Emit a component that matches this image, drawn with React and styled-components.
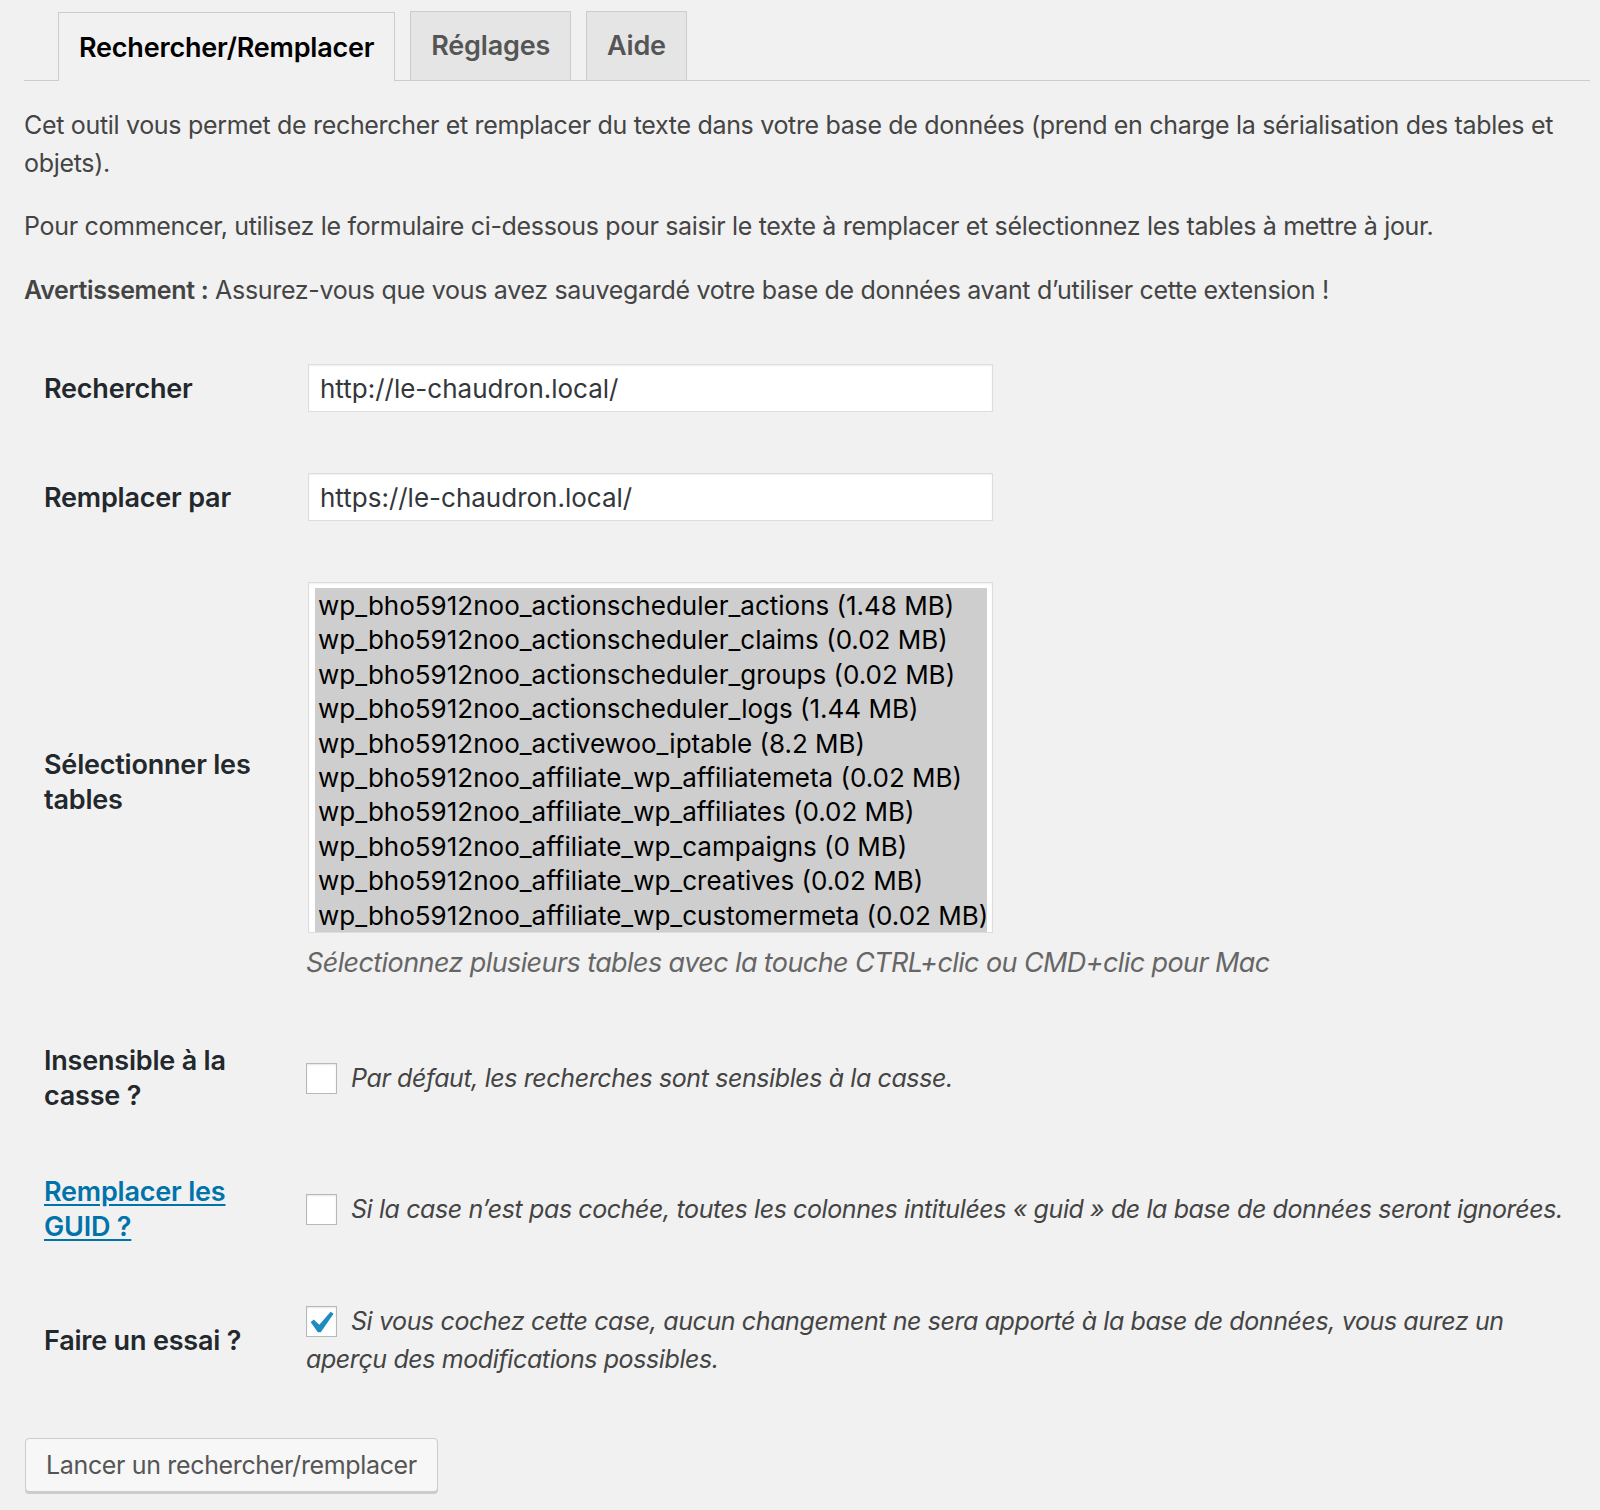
import React from "react";
import styled, { createGlobalStyle } from "styled-components";

const GlobalStyle = createGlobalStyle`
  html, body { margin: 0; padding: 0; }
  body {
    background: #f1f1f1;
    font-family: Inter, "Noto Sans", "Liberation Sans", sans-serif;
    color: #444;
    -webkit-font-smoothing: antialiased;
  }
  * { box-sizing: border-box; }
`;

const Page = styled.div`
  padding: 11px 10px 15px 24px;
`;

const TabBar = styled.nav`
  display: flex;
  align-items: flex-end;
  gap: 15px;
  padding-left: 34px;
  border-bottom: 1px solid #ccc;
`;

const Tab = styled.a`
  display: block;
  height: 69px;
  padding: 0 20px;
  border: 1px solid #ccc;
  border-bottom: none;
  margin-bottom: ${(p) => (p.$active ? "-1px" : "0")};
  background: ${(p) => (p.$active ? "#f1f1f1" : "#e5e5e5")};
  color: ${(p) => (p.$active ? "#000" : "#555")};
  font-size: 27px;
  font-weight: 600;
  letter-spacing: -0.2px;
  line-height: ${(p) => (p.$active ? "69px" : "68px")};
  text-decoration: none;
  white-space: nowrap;
`;

const Intro = styled.p`
  margin: 26px 0 25px;
  font-size: 25px;
  line-height: 37.5px;
  letter-spacing: -0.32px;
  color: #444;
`;

const Strong = styled.strong`
  font-weight: 600;
`;

const FormTable = styled.div`
  display: flex;
  flex-direction: column;
`;

const Row = styled.div`
  display: grid;
  grid-template-columns: 264px 1fr;
  align-items: center;
  padding: ${(p) => (p.$tight ? "27px" : "30px")} 10px 31px 20px;
`;

const Label = styled.div`
  width: 232px;
  font-size: 27px;
  font-weight: 600;
  line-height: 35px;
  letter-spacing: -0.2px;
  color: #23282d;
`;

const LabelLink = styled.a`
  color: #0073aa;
  text-decoration: underline;
  text-underline-offset: 3px;
`;

const TextInput = styled.input`
  display: block;
  width: 685px;
  height: 48px;
  margin: 0;
  padding: 0 11px;
  border: 1px solid #ddd;
  box-shadow: inset 0 1px 2px rgba(0, 0, 0, 0.07);
  background: #fff;
  color: #32373c;
  font-family: inherit;
  font-size: 26px;
  outline: none;
`;

const ListBox = styled.div`
  width: 685px;
  height: 351px;
  padding: 5px 5px 1px 6px;
  border: 1px solid #ddd;
  background: #fff;
  overflow: hidden;
  box-shadow: inset 0 1px 2px rgba(0, 0, 0, 0.07);
`;

const Option = styled.div`
  height: 34.4px;
  padding-left: 3px;
  background: #cecece;
  color: #000;
  font-size: 26px;
  line-height: 35.4px;
  white-space: nowrap;
`;

const Help = styled.p`
  margin: 11px 0 0 -2px;
  font-size: 27px;
  line-height: 38px;
  letter-spacing: -0.6px;
  font-style: italic;
  color: #666;
`;

const CheckLine = styled.label`
  display: block;
  font-size: 25px;
  line-height: 38px;
  letter-spacing: -0.4px;
  font-style: italic;
  color: #444;
  margin-left: -2px;
`;

const Box = styled.span`
  position: relative;
  display: inline-block;
  width: 31px;
  height: 31px;
  margin: -4px 14px 0 0;
  vertical-align: middle;
  border: 1px solid #b4b9be;
  background: #fff;
  box-shadow: inset 0 1px 2px rgba(0, 0, 0, 0.1);
`;

const CheckMark = styled.svg`
  position: absolute;
  left: -9px;
  top: -6px;
  width: 44px;
  height: 44px;
`;

const Button = styled.button`
  display: block;
  margin: 29px 0 0 1px;
  height: 54px;
  padding: 0 20px;
  border: 1px solid #ccc;
  border-radius: 4px;
  background: #f7f7f7;
  box-shadow: 0 2px 0 #ccc;
  color: #555;
  font-family: inherit;
  font-size: 25px;
  letter-spacing: -0.35px;
  cursor: pointer;
`;

const Check = ({ checked }) => (
  <Box role="checkbox" aria-checked={checked ? "true" : "false"}>
    {checked && (
      <CheckMark viewBox="0 0 20 20">
        <path
          d="M14.83 4.89l1.34.94-5.81 8.38H9.02L5.78 9.67l1.34-1.25 2.57 2.4z"
          fill="#1e8cbe"
        />
      </CheckMark>
    )}
  </Box>
);

const tables = [
  "wp_bho5912noo_actionscheduler_actions (1.48 MB)",
  "wp_bho5912noo_actionscheduler_claims (0.02 MB)",
  "wp_bho5912noo_actionscheduler_groups (0.02 MB)",
  "wp_bho5912noo_actionscheduler_logs (1.44 MB)",
  "wp_bho5912noo_activewoo_iptable (8.2 MB)",
  "wp_bho5912noo_affiliate_wp_affiliatemeta (0.02 MB)",
  "wp_bho5912noo_affiliate_wp_affiliates (0.02 MB)",
  "wp_bho5912noo_affiliate_wp_campaigns (0 MB)",
  "wp_bho5912noo_affiliate_wp_creatives (0.02 MB)",
  "wp_bho5912noo_affiliate_wp_customermeta (0.02 MB)",
];

export default function App() {
  return (
    <>
      <GlobalStyle />
      <Page>
        <TabBar>
          <Tab $active>Rechercher/Remplacer</Tab>
          <Tab>Réglages</Tab>
          <Tab>Aide</Tab>
        </TabBar>

        <Intro>
          Cet outil vous permet de rechercher et remplacer du texte dans votre base de
          données (prend en charge la sérialisation des tables et objets).
        </Intro>
        <Intro>
          Pour commencer, utilisez le formulaire ci-dessous pour saisir le texte à
          remplacer et sélectionnez les tables à mettre à jour.
        </Intro>
        <Intro>
          <Strong>Avertissement :</Strong> Assurez-vous que vous avez sauvegardé votre
          base de données avant d’utiliser cette extension !
        </Intro>

        <FormTable>
          <Row>
            <Label>Rechercher</Label>
            <TextInput defaultValue="http://le-chaudron.local/" />
          </Row>
          <Row>
            <Label>Remplacer par</Label>
            <TextInput defaultValue="https://le-chaudron.local/" />
          </Row>
          <Row>
            <Label>Sélectionner les tables</Label>
            <div>
              <ListBox role="listbox" aria-multiselectable="true">
                {tables.map((t) => (
                  <Option key={t} role="option" aria-selected="true">
                    {t}
                  </Option>
                ))}
              </ListBox>
              <Help>
                Sélectionnez plusieurs tables avec la touche CTRL+clic ou CMD+clic pour
                Mac
              </Help>
            </div>
          </Row>
          <Row>
            <Label>Insensible à la casse ?</Label>
            <CheckLine>
              <Check />
              Par défaut, les recherches sont sensibles à la casse.
            </CheckLine>
          </Row>
          <Row>
            <Label>
              <LabelLink href="#">Remplacer les GUID ?</LabelLink>
            </Label>
            <CheckLine>
              <Check />
              Si la case n’est pas cochée, toutes les colonnes intitulées « guid » de la
              base de données seront ignorées.
            </CheckLine>
          </Row>
          <Row $tight>
            <Label>Faire un essai ?</Label>
            <CheckLine>
              <Check checked />
              Si vous cochez cette case, aucun changement ne sera apporté à la base de
              données, vous aurez un aperçu des modifications possibles.
            </CheckLine>
          </Row>
        </FormTable>

        <Button>Lancer un rechercher/remplacer</Button>
      </Page>
    </>
  );
}
